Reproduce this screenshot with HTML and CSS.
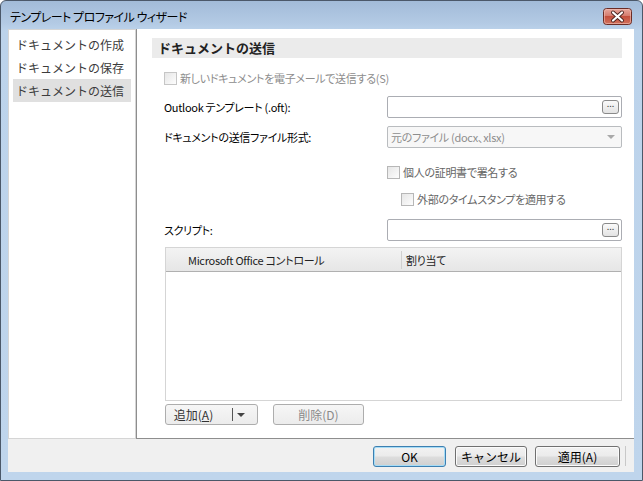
FILE: index.html
```html
<!DOCTYPE html>
<html lang="ja">
<head>
  <meta charset="UTF-8">
  <title>テンプレート プロファイル ウィザード</title>
  <link rel="stylesheet" href="styles.css">
</head>
<body>

  <div class="window">
    <div class="titlebar">
      <span class="title">テンプレート プロファイル ウィザード</span>
      <button class="close-btn" aria-label="閉じる">
        <svg width="29" height="17" viewBox="0 0 29 17">
          <defs>
            <linearGradient id="closeBg" x1="0" y1="0" x2="0" y2="1">
              <stop offset="0" stop-color="#e8a99f"/>
              <stop offset="0.45" stop-color="#d67d6f"/>
              <stop offset="0.5" stop-color="#c4503e"/>
              <stop offset="1" stop-color="#d2735e"/>
            </linearGradient>
          </defs>
          <rect x="0.5" y="0.5" width="28" height="16" rx="3" fill="url(#closeBg)" stroke="#6b2c25"/>
          <rect x="1.5" y="1.5" width="26" height="14" rx="2" fill="none" stroke="#f1c2b8" stroke-opacity="0.6"/>
          <path d="M10 4.5 L19 12.5 M19 4.5 L10 12.5" stroke="#4a2420" stroke-width="4" stroke-linecap="round"/>
          <path d="M10 4.5 L19 12.5 M19 4.5 L10 12.5" stroke="#ffffff" stroke-width="2.2" stroke-linecap="round"/>
        </svg>
      </button>
    </div>

    <div class="client">
      <div class="main">
        <ul class="nav">
          <li>ドキュメントの作成</li>
          <li>ドキュメントの保存</li>
          <li class="active">ドキュメントの送信</li>
        </ul>

        <div class="content">
          <h2 class="section-title">ドキュメントの送信</h2>

          <div class="form">
            <div class="check disabled row-mail"><span class="box"></span>新しいドキュメントを電子メールで送信する(S)</div>

            <div class="field row-outlook">
              <span class="label">Outlook テンプレート (.oft):</span>
              <div class="input"><span class="browse">...</span></div>
            </div>

            <div class="field row-format">
              <span class="label">ドキュメントの送信ファイル形式:</span>
              <div class="select"><span>元のファイル (docx、xlsx)</span><span class="arrow"></span></div>
            </div>

            <div class="check dim row-sign"><span class="box"></span>個人の証明書で署名する</div>
            <div class="check dim row-stamp"><span class="box"></span>外部のタイムスタンプを適用する</div>

            <div class="field row-script">
              <span class="label">スクリプト:</span>
              <div class="input"><span class="browse">...</span></div>
            </div>

            <div class="grid">
              <div class="grid-head">
                <span class="col-control">Microsoft Office コントロール</span>
                <span class="col-assign">割り当て</span>
              </div>
            </div>

            <div class="grid-buttons">
              <button class="small-btn split">追加(<u>A</u>)<span class="split-sep"></span><span class="split-arrow"></span></button>
              <button class="small-btn off">削除(D)</button>
            </div>
          </div>
        </div>
      </div>

      <div class="footer">
        <button class="btn default">OK</button>
        <button class="btn">キャンセル</button>
        <button class="btn wide">適用(A)</button>
        <span class="clipped"></span>
      </div>
    </div>
  </div>

</body>
</html>
```

FILE: styles.css
```css
body {
  margin: 0;
  padding: 0;
  font-family: "Noto Sans CJK JP", "Noto Sans", sans-serif;
  font-size: 12px;
  background-color: #ffffff;
}

.window {
  width: 643px;
  height: 481px;
  box-sizing: border-box;
  border: 1px solid #4b5869;
  border-radius: 6px 6px 0 0;
  background: linear-gradient(#a2bbd8 0px, #b3cae4 22px, #bcd3eb 30px, #bfd5ec 100%);
  display: flex;
  flex-direction: column;
}

.titlebar {
  height: 28px;
  display: flex;
  align-items: flex-start;
  padding-left: 9px;
}

.title {
  margin-top: 7px;
  line-height: 18px;
  font-size: 12px;
  letter-spacing: -0.5px;
  color: #000;
  font-feature-settings: "palt";
}

.close-btn {
  margin: 7px 10px 0 auto;
  padding: 0;
  border: none;
  background: none;
  width: 29px;
  height: 17px;
  display: block;
}

.close-btn svg {
  display: block;
}

.client {
  flex: 1;
  margin: 0 8px 8px 7px;
  background-color: #f0f0f0;
  display: flex;
  flex-direction: column;
}

.main {
  display: flex;
  height: 410px;
}

/* left navigation */
.nav {
  width: 128px;
  box-sizing: border-box;
  margin: 0;
  padding: 3px 4px;
  list-style: none;
  background-color: #fff;
  border: 1px solid #d5d5d5;
}

.nav li {
  height: 23px;
  line-height: 23px;
  padding-left: 3px;
  color: #3c3c3c;
  font-size: 12px;
}

.nav li.active {
  background-color: #e0e0e0;
}

/* right page */
.content {
  flex: 1;
  background-color: #fff;
  border-left: 1px solid #8e8e8e;
  border-bottom: 1px solid #8e8e8e;
  padding: 9px 12px 0 15px;
}

.section-title {
  margin: 0;
  height: 20px;
  line-height: 20px;
  padding-left: 6px;
  font-size: 13px;
  font-weight: bold;
  color: #222;
  background-color: #ebebeb;
}

.form {
  padding-left: 12px;
  font-size: 11px;
  letter-spacing: -0.3px;
  font-feature-settings: "palt";
}

.check {
  display: flex;
  align-items: center;
  height: 22px;
  color: #000;
}

.check .box {
  width: 11px;
  height: 11px;
  border: 1px solid #b7b7b7;
  background: linear-gradient(135deg, #e6e6e6, #fdfdfd);
  margin-right: 3px;
}

.check.disabled {
  color: #8d8d8d;
}

.check.disabled .box {
  border-color: #c6c6c6;
}

.check.dim {
  color: #666;
  margin-left: 223px;
}

.field {
  display: flex;
  align-items: center;
  height: 22px;
}

.label {
  width: 223px;
  flex-shrink: 0;
  color: #000;
}

.input,
.select {
  flex: 1;
  height: 22px;
  box-sizing: border-box;
  border: 1px solid #abadb3;
  border-radius: 2px;
  background-color: #fff;
  display: flex;
  align-items: center;
}

.input {
  justify-content: flex-end;
  padding-right: 2px;
}

.browse {
  width: 15px;
  height: 12px;
  border: 1px solid #8a8a8a;
  border-radius: 3px;
  background: linear-gradient(#fafafa, #e3e3e3);
  font-size: 9px;
  line-height: 6px;
  letter-spacing: 0;
  text-align: center;
  color: #444;
}

.select {
  border-color: #b9bcbf;
  background-color: #f7f7f7;
  color: #8d8d8d;
  padding: 0 6px 0 3px;
  justify-content: space-between;
}

.select .arrow {
  width: 0;
  height: 0;
  border-left: 4px solid transparent;
  border-right: 4px solid transparent;
  border-top: 4px solid #a9a9a9;
}

.row-mail { margin-top: 9px; }
.row-outlook { margin-top: 7px; }
.row-format { margin-top: 8px; }
.check.row-sign { margin-top: 13px; }
.check.row-stamp { margin-top: 5px; margin-left: 237px; }
.row-script { margin-top: 9px; }

/* control list */
.grid {
  margin: 6px 0 0 1px;
  height: 154px;
  box-sizing: border-box;
  border: 1px solid #d5d5d5;
  background-color: #fff;
}

.grid-head {
  height: 23px;
  display: flex;
  align-items: center;
  background: linear-gradient(#f3f3f3, #e6e6e6);
  border-bottom: 1px solid #b0b0b0;
  color: #222;
}

.col-control {
  width: 213px;
  padding-left: 22px;
  border-right: 1px solid #d0d0d0;
  line-height: 18px;
}

.col-assign {
  padding-left: 4px;
}

.grid-buttons {
  display: flex;
  gap: 15px;
  margin: 3px 0 0 1px;
}

.small-btn {
  height: 21px;
  box-sizing: border-box;
  border: 1px solid #adadad;
  border-radius: 3px;
  background: linear-gradient(#f6f6f6, #ececec);
  font-family: inherit;
  font-size: 12px;
  color: #333;
  padding: 0;
  display: flex;
  align-items: center;
  justify-content: center;
}

.small-btn.split {
  width: 93px;
  padding-left: 2px;
}

.split-sep {
  width: 1px;
  height: 13px;
  background-color: #555;
  margin-left: 19px;
}

.split-arrow {
  width: 0;
  height: 0;
  border-left: 4px solid transparent;
  border-right: 4px solid transparent;
  border-top: 4px solid #444;
  margin: 0 6px 0 4px;
}

.small-btn.off {
  width: 91px;
  color: #8a8a8a;
}

/* bottom buttons */
.footer {
  flex: 1;
  display: flex;
  justify-content: flex-end;
  align-items: flex-start;
  padding-top: 7px;
  gap: 8px;
}

.btn {
  width: 72px;
  height: 21px;
  box-sizing: border-box;
  border: 1px solid #707070;
  border-radius: 3px;
  background: linear-gradient(#f2f2f2 0%, #ebebeb 48%, #dddddd 52%, #cfcfcf 100%);
  box-shadow: inset 0 0 0 1px #fbfbfb;
  font-family: inherit;
  font-size: 12px;
  color: #000;
  padding: 0;
}

.btn.default {
  width: 73px;
  border-color: #3c7fb1;
  box-shadow: inset 0 0 0 1px #a6dcf6;
  margin-right: 1px;
}

.btn.wide {
  width: 85px;
}

.clipped {
  width: 9px;
  height: 20px;
  box-sizing: border-box;
  border-left: 1px solid #c8c8c8;
  margin-left: -3px;
}
```
